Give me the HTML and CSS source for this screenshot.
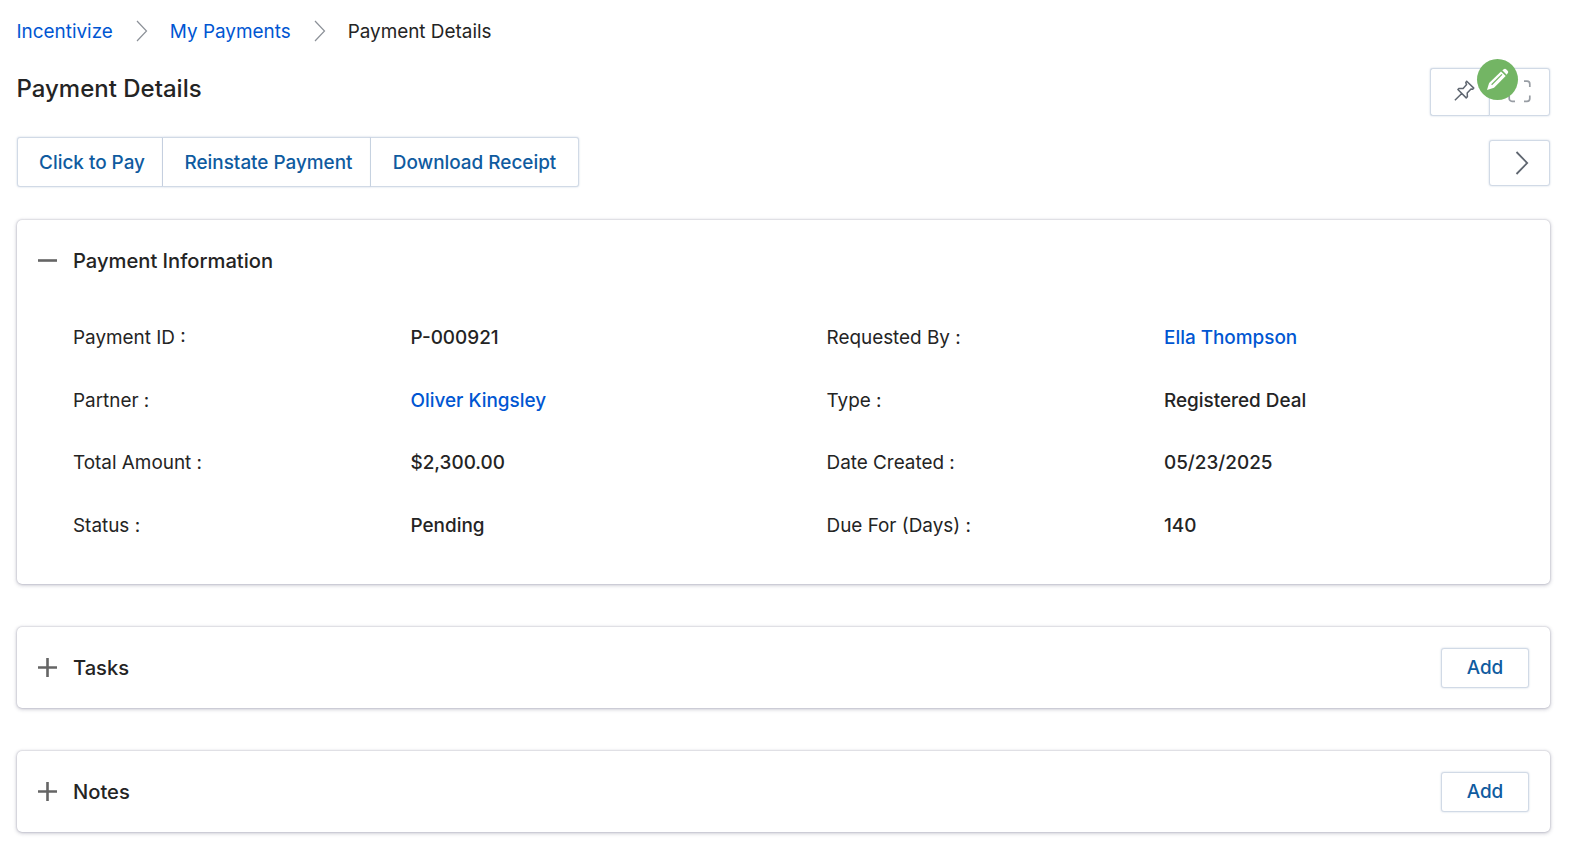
FILE: index.html
```html
<!DOCTYPE html>
<html lang="en">
<head>
<meta charset="utf-8">
<title>Payment Details</title>
<link rel="stylesheet" href="styles.css">
</head>
<body>
<main class="page">
  <nav class="breadcrumb">
    <a class="link crumb" href="#">Incentivize</a>
    <svg class="crumb-sep" viewBox="0 0 12 22"><path d="M1 1l9.5 10L1 21"/></svg>
    <a class="link crumb" href="#">My Payments</a>
    <svg class="crumb-sep" viewBox="0 0 12 22"><path d="M1 1l9.5 10L1 21"/></svg>
    <span class="crumb">Payment Details</span>
  </nav>

  <header class="title-row">
    <h1 class="title">Payment Details</h1>
    <div class="tools">
      <button class="tool tool-pin" aria-label="Pin">
        <svg width="21" height="21" viewBox="0 0 21 21"><path d="M12.7 1.2l7.1 6.9-1.1 1.2-1.7-.3-3.8 3.9.2 3.9-1.2 1.1L3.9 9.5l1.2-1.1 4 .1L12.6 4.600l-.8-1.900zM8 13.300L.9 20.300"/></svg>
      </button>
      <button class="tool tool-expand" aria-label="Expand">
        <svg width="23" height="23" viewBox="0 0 23 23"><path d="M1.200 7V4a2.800 2.800 0 0 1 2.800-2.800h3M16 1.200h3A2.800 2.800 0 0 1 21.800 4v3M21.800 15.500v3a2.800 2.800 0 0 1-2.800 2.800h-3M7 21.300H4a2.800 2.800 0 0 1-2.800-2.800v-3"/></svg>
      </button>
      <span class="edit-badge">
        <svg width="41" height="41" viewBox="0 0 41 41"><path class="solid" d="M25.300 11.300l1.900-1.300q1-.6 1.900.2l1.700 1.700q.8.900.2 1.900l-1.300 1.900z"/><path class="solid" d="M10 31l2.100-6.900L24 12.400l4.700 4.700L17 28.700z"/><path class="groove" d="M14.600 25.700L25 15.400"/></svg>
      </span>
    </div>
  </header>

  <div class="action-row">
    <div class="actions">
      <button class="btn btn-pay">Click to Pay</button>
      <button class="btn btn-reinstate">Reinstate Payment</button>
      <button class="btn btn-receipt">Download Receipt</button>
    </div>
    <button class="btn btn-next" aria-label="Next">
      <svg width="14" height="24" viewBox="0 0 14 24"><path d="M1.500 1l10.700 11L1.500 23"/></svg>
    </button>
  </div>

  <section class="card card-info">
    <div class="card-head">
      <svg class="toggle" viewBox="0 0 19 19"><path d="M0 8.500h19"/></svg>
      <h2 class="card-title">Payment Information</h2>
    </div>
    <dl class="fields">
      <dt>Payment ID :</dt><dd>P-000921</dd>
      <dt>Requested By :</dt><dd><a class="link" href="#">Ella Thompson</a></dd>
      <dt>Partner :</dt><dd><a class="link" href="#">Oliver Kingsley</a></dd>
      <dt>Type :</dt><dd>Registered Deal</dd>
      <dt>Total Amount :</dt><dd>$2,300.00</dd>
      <dt>Date Created :</dt><dd>05/23/2025</dd>
      <dt>Status :</dt><dd>Pending</dd>
      <dt>Due For (Days) :</dt><dd>140</dd>
    </dl>
  </section>

  <section class="card card-slim">
    <svg class="toggle" viewBox="0 0 19 19"><path d="M0 9.500h19M9.500 0v19"/></svg>
    <h2 class="card-title">Tasks</h2>
    <button class="btn btn-add">Add</button>
  </section>

  <section class="card card-slim">
    <svg class="toggle" viewBox="0 0 19 19"><path d="M0 9.500h19M9.500 0v19"/></svg>
    <h2 class="card-title">Notes</h2>
    <button class="btn btn-add">Add</button>
  </section>
</main>
</body>
</html>
```
FILE: styles.css
```css
* { box-sizing: border-box; }
body {
  margin: 0;
  background: #fff;
  color: #242424;
  font: 400 18.900px/24px Inter, sans-serif;
}
svg { display: block; flex: none; fill: none; stroke: #5f6670; }
h1, h2, dl, dd { margin: 0; }
button { font: inherit; padding: 0; }
.link { color: #0056d2; text-decoration: none; }
.page { width: 1571px; min-height: 857px; padding: 19px 21px 0 16.500px; }

.breadcrumb { display: flex; align-items: center; height: 24px; }
.crumb { padding-top: 2px; }
.crumb-sep { width: 12px; height: 22px; margin: 0 22px 0 23px; stroke: #8c9198; stroke-width: 1.200; }

.title-row { display: flex; justify-content: space-between; margin-top: 25px; height: 48px; }
.title { font-size: 24px; font-weight: 500; line-height: 30px; padding-top: 6px; }
.tools { position: relative; display: flex; }
.tool {
  display: flex; align-items: center; justify-content: center;
  height: 48px; background: #fff; border: 1px solid #d1dae6;
  box-shadow: 0 0 2px rgba(120, 145, 180, .4);
}
.tool-pin { width: 59px; padding: 0 0 3px 9px; border-right: 0; border-radius: 3px 0 0 3px; }
.tool-pin svg { stroke-width: 1.500; stroke-linejoin: round; }
.tool-expand { width: 61px; padding-bottom: 1px; border-radius: 0 3px 3px 0; }
.tool-expand svg { stroke: #989da4; stroke-width: 1.700; }
.edit-badge {
  position: absolute; left: 47px; top: -9px;
  width: 41px; height: 41px; border-radius: 50%; background: #73b564;
}
.edit-badge .solid { fill: #fff; stroke: none; }
.edit-badge .groove { stroke: #73b564; stroke-width: 1.200; }

.action-row { display: flex; justify-content: space-between; align-items: center; margin-top: 20px; height: 51px; }
.actions { display: flex; }
.btn {
  display: flex; align-items: center; justify-content: center;
  background: #fff; border: 1px solid #d1dae6; border-radius: 3px;
  color: #0f5ba0; font-weight: 500;
  box-shadow: 0 0 2px rgba(120, 145, 180, .4);
}
.actions .btn { height: 50px; padding-top: 2px; border-radius: 0; }
.actions .btn + .btn { border-left: 0; }
.actions .btn-pay { width: 146px; padding-left: 5px; border-radius: 3px 0 0 3px; }
.btn-reinstate { width: 208px; padding-left: 5px; }
.actions .btn-receipt { width: 208px; padding-left: 1px; border-radius: 0 3px 3px 0; }
.btn-next { width: 61px; height: 46px; margin-top: 2px; padding-left: 5px; }
.btn-next svg { stroke-width: 1.800; }

.card {
  background: #fff; border-radius: 5px;
  box-shadow: 0 0 2px rgba(30, 30, 70, .28), 0 1px 4px rgba(30, 30, 70, .28);
}
.card-info { margin-top: 33px; height: 364px; padding: 29px 0 0 21.500px; }
.card-head { display: flex; align-items: center; height: 24px; }
.toggle { width: 19px; height: 19px; margin-right: 16px; stroke: #656565; stroke-width: 2.600; }
.card-title { font-size: 20.150px; font-weight: 500; }
.fields {
  display: grid; grid-template-columns: 337.500px 416px 337.500px 1fr;
  grid-auto-rows: 62.500px; align-items: center;
  margin-top: 34px; padding-left: 35px;
}
.fields dd { font-weight: 500; }
.card-slim { display: flex; align-items: center; height: 81px; margin-top: 43px; padding: 0 21px 0 21.500px; }
.btn-add { width: 88px; height: 40px; margin-left: auto; }
```
